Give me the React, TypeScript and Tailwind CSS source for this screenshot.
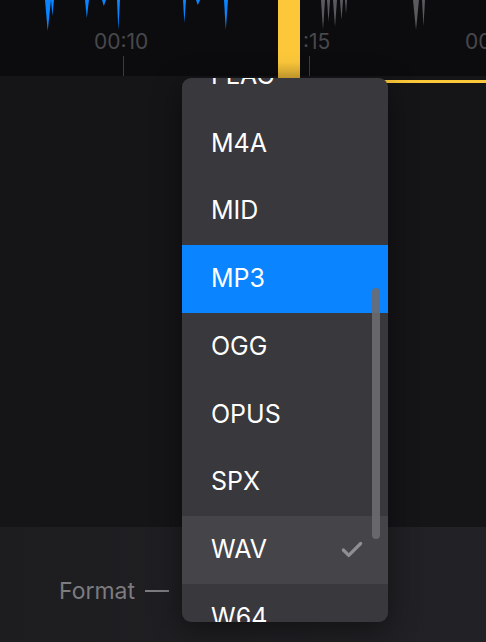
import { Check } from "lucide-react";

const FORMATS = ["FLAC", "M4A", "MID", "MP3", "OGG", "OPUS", "SPX", "WAV", "W64"];
const HIGHLIGHTED = "MP3";
const SELECTED = "WAV";

// spikes hanging from the top edge: [x, width, depth]
const BLUE_SPIKES: Array<[number, number, number]> = [
  [45, 6, 31],
  [51, 3, 16],
  [85, 4, 18],
  [102, 4, 6],
  [117, 3, 30],
  [183, 3, 23],
  [196, 4, 5],
  [224, 4, 30],
];

const GRAY_SPIKES: Array<[number, number, number]> = [
  [321, 4, 30],
  [327, 3, 22],
  [333, 4, 27],
  [340, 3, 20],
  [345, 2, 14],
  [413, 6, 30],
  [422, 3, 26],
];

function Waveform() {
  return (
    <div className="relative h-[76px] shrink-0 bg-[#0c0c0f]">
      <svg className="absolute inset-0" width="486" height="76" viewBox="0 0 486 76">
        {BLUE_SPIKES.map(([x, w, d], i) => (
          <polygon key={i} points={`${x},0 ${x + w},0 ${x + w * 0.45},${d}`} fill="#0a84ff" />
        ))}
        {GRAY_SPIKES.map(([x, w, d], i) => (
          <polygon key={i} points={`${x},0 ${x + w},0 ${x + w * 0.5},${d}`} fill="#5a5a5e" />
        ))}
        <line x1="123.5" y1="56" x2="123.5" y2="76" stroke="#3c3c40" strokeWidth="1" />
        <line x1="309.5" y1="56" x2="309.5" y2="76" stroke="#3c3c40" strokeWidth="1" />
      </svg>
      <span className="absolute left-[94px] top-[30px] text-[21px] leading-6 text-[#48484c]">00:10</span>
      <span className="absolute left-[303px] top-[30px] text-[21px] leading-6 text-[#48484c]">:15</span>
      <span className="absolute left-[465px] top-[30px] text-[21px] leading-6 text-[#48484c]">00</span>
      {/* selected region edge */}
      <div className="absolute left-[278px] top-0 h-[78px] w-[22px] bg-gradient-to-b from-[#fcc83a] from-80% to-[#d9aa33]" />
      <div className="absolute left-[300px] right-0 top-[80px] h-[3px] bg-[#fcc83a]" />
    </div>
  );
}

function FormatMenu() {
  return (
    <div className="absolute left-[182px] top-[78px] h-[544px] w-[206px] overflow-hidden rounded-[9px] bg-[#38383d] shadow-[0_8px_30px_rgba(0,0,0,0.45)]">
      <ul className="-mt-[36px]">
        {FORMATS.map((f) => (
          <li
            key={f}
            className={`flex h-[67.7px] items-center justify-between pl-[29px] pr-[23px] text-[25px] text-white ${
              f === HIGHLIGHTED ? "bg-[#0a84ff]" : f === SELECTED ? "bg-[#444449]" : ""
            }`}
          >
            <span>{f}</span>
            {f === SELECTED && <Check className="h-[26px] w-[26px] text-[#8e8e93]" strokeWidth={3} />}
          </li>
        ))}
      </ul>
      <div className="absolute right-[8px] top-[210px] h-[251px] w-[8px] rounded-full bg-[#6b6b70]/90" />
    </div>
  );
}

export default function App() {
  return (
    <div
      className="relative flex h-[642px] w-full flex-col overflow-hidden bg-[#16161a]"
      style={{ fontFamily: "Inter, 'Noto Sans', sans-serif" }}
    >
      <Waveform />
      <div className="flex-1 bg-[#151518]" />
      <div className="flex h-[115px] shrink-0 items-center gap-[10px] bg-gradient-to-r from-[#1d1d20] to-[#222226] pl-[59px] pt-[13px] text-[23px] text-[#7b7b80]">
        <span>Format</span>
        <span className="h-[2px] w-[24px] bg-[#7b7b80]" />
      </div>
      <FormatMenu />
    </div>
  );
}
